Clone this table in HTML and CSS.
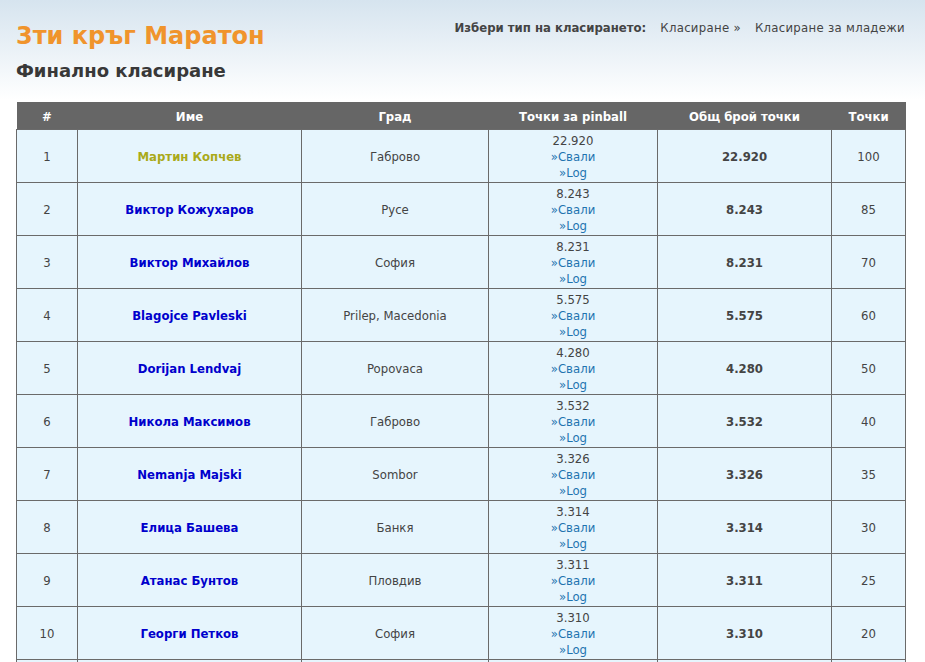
FILE: index.html
```html
<!DOCTYPE html>
<html lang="bg">
<head>
<meta charset="utf-8">
<title>3ти кръг Маратон</title>
<link rel="stylesheet" href="styles.css">
</head>
<body>
<div class="page">
  <header class="top">
    <div class="titles">
      <h1 class="title">3ти кръг Маратон</h1>
      <h2 class="subtitle">Финално класиране</h2>
    </div>
    <nav class="types">
      <span class="types-label">Избери тип на класирането:</span>
      <a class="type-link" href="#">Класиране »</a>
      <a class="type-link" href="#">Класиране за младежи</a>
    </nav>
  </header>
  <table class="ranking">
    <colgroup>
      <col class="c-pos"><col class="c-name"><col class="c-city"><col class="c-pin"><col class="c-total"><col class="c-pts">
    </colgroup>
    <thead>
      <tr><th>#</th><th>Име</th><th>Град</th><th>Точки за pinball</th><th>Общ брой точки</th><th>Точки</th></tr>
    </thead>
    <tbody>
      <tr><td>1</td><td><a class="player first" href="#">Мартин Копчев</a></td><td>Габрово</td><td class="pin">22.920<br><a href="#">»Свали</a><br><a href="#">»Log</a></td><td class="total">22.920</td><td>100</td></tr>
      <tr><td>2</td><td><a class="player" href="#">Виктор Кожухаров</a></td><td>Русе</td><td class="pin">8.243<br><a href="#">»Свали</a><br><a href="#">»Log</a></td><td class="total">8.243</td><td>85</td></tr>
      <tr><td>3</td><td><a class="player" href="#">Виктор Михайлов</a></td><td>София</td><td class="pin">8.231<br><a href="#">»Свали</a><br><a href="#">»Log</a></td><td class="total">8.231</td><td>70</td></tr>
      <tr><td>4</td><td><a class="player" href="#">Blagojce Pavleski</a></td><td>Prilep, Macedonia</td><td class="pin">5.575<br><a href="#">»Свали</a><br><a href="#">»Log</a></td><td class="total">5.575</td><td>60</td></tr>
      <tr><td>5</td><td><a class="player" href="#">Dorijan Lendvaj</a></td><td>Popovaca</td><td class="pin">4.280<br><a href="#">»Свали</a><br><a href="#">»Log</a></td><td class="total">4.280</td><td>50</td></tr>
      <tr><td>6</td><td><a class="player" href="#">Никола Максимов</a></td><td>Габрово</td><td class="pin">3.532<br><a href="#">»Свали</a><br><a href="#">»Log</a></td><td class="total">3.532</td><td>40</td></tr>
      <tr><td>7</td><td><a class="player" href="#">Nemanja Majski</a></td><td>Sombor</td><td class="pin">3.326<br><a href="#">»Свали</a><br><a href="#">»Log</a></td><td class="total">3.326</td><td>35</td></tr>
      <tr><td>8</td><td><a class="player" href="#">Елица Башева</a></td><td>Банкя</td><td class="pin">3.314<br><a href="#">»Свали</a><br><a href="#">»Log</a></td><td class="total">3.314</td><td>30</td></tr>
      <tr><td>9</td><td><a class="player" href="#">Атанас Бунтов</a></td><td>Пловдив</td><td class="pin">3.311<br><a href="#">»Свали</a><br><a href="#">»Log</a></td><td class="total">3.311</td><td>25</td></tr>
      <tr><td>10</td><td><a class="player" href="#">Георги Петков</a></td><td>София</td><td class="pin">3.310<br><a href="#">»Свали</a><br><a href="#">»Log</a></td><td class="total">3.310</td><td>20</td></tr>
      <tr class="more" aria-hidden="true"><td></td><td></td><td></td><td></td><td></td><td></td></tr>
    </tbody>
  </table>
</div>
</body>
</html>
```

FILE: styles.css
```css
html, body {
  margin: 0;
  padding: 0;
}
body {
  font-family: "DejaVu Sans Condensed", "DejaVu Sans", Verdana, sans-serif;
  font-size: 13px;
  color: #444;
  background: linear-gradient(to bottom, #d6e4ef 0px, #ffffff 100px) no-repeat;
  background-color: #fff;
  min-height: 662px;
}
.page {
  padding: 0 20px 0 16px;
}
.top {
  display: flex;
  justify-content: space-between;
  align-items: flex-start;
  height: 102px;
}
.title {
  margin: 0;
  padding-top: 20px;
  font-family: "DejaVu Sans", Verdana, sans-serif;
  font-size: 24px;
  line-height: 32px;
  font-weight: bold;
  color: #f0942c;
}
.subtitle {
  margin: 0;
  padding-top: 7px;
  font-family: "DejaVu Sans", Verdana, sans-serif;
  font-size: 18px;
  line-height: 24px;
  font-weight: bold;
  color: #383838;
}
.types {
  padding-top: 19px;
  font-size: 13px;
  line-height: 18px;
  display: flex;
  gap: 14px;
}
.types-label {
  font-weight: bold;
  color: #444;
}
.type-link {
  color: #444;
  text-decoration: none;
  letter-spacing: 0.3px;
}
.ranking {
  width: 889px;
  border-collapse: collapse;
  table-layout: fixed;
}
.c-pos { width: 61px; }
.c-name { width: 224px; }
.c-city { width: 187px; }
.c-pin { width: 169px; }
.c-total { width: 174px; }
.c-pts { width: 74px; }
.ranking th {
  background: #666666;
  color: #fff;
  font-weight: bold;
  height: 26px;
  padding: 1px 0 0;
  text-align: center;
  border: none;
}
.ranking td {
  background: #e6f5fd;
  border: 1px solid #6a6a6a;
  text-align: center;
  padding: 3px 0 1px;
  height: 48px;
  line-height: 16px;
}
.pin a {
  color: #1f74b0;
  text-decoration: none;
}
.total {
  font-weight: bold;
}
.player {
  font-weight: bold;
  color: #0000cc;
  text-decoration: none;
}
.player.first {
  color: #aaaa1a;
}
```
